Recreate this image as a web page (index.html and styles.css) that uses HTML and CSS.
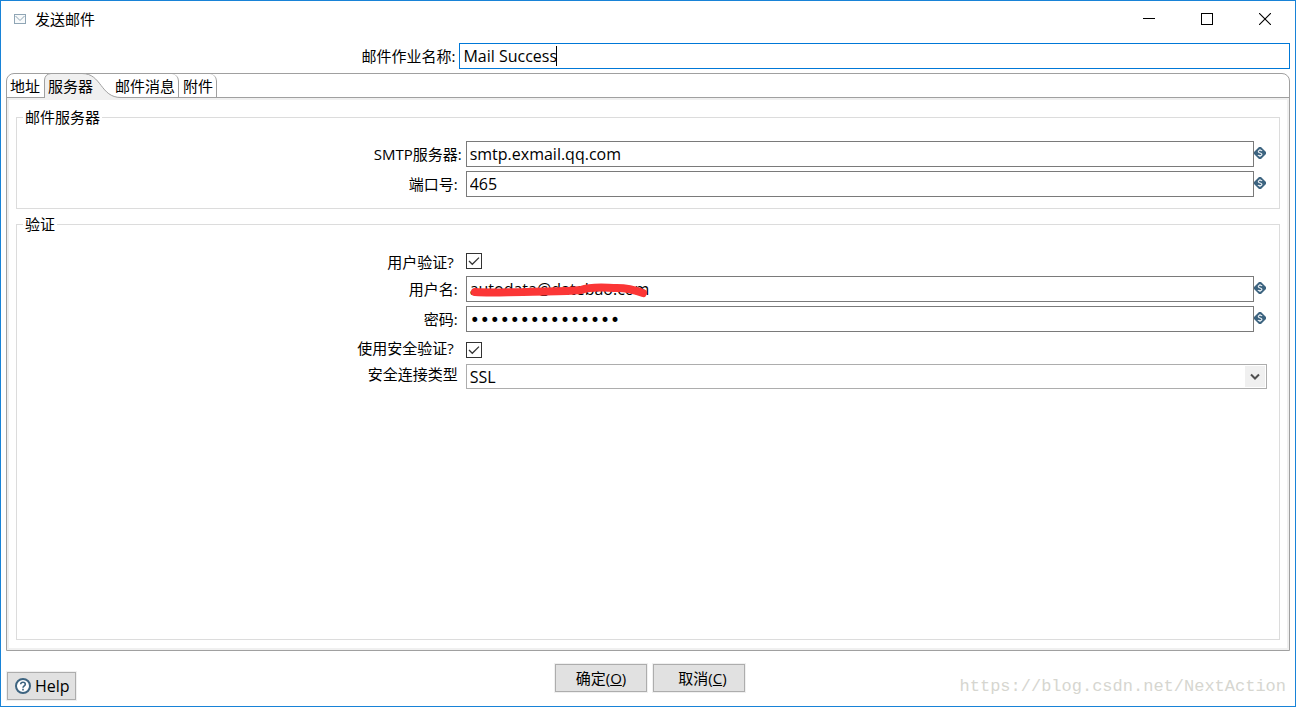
FILE: index.html
```html
<!DOCTYPE html>
<html lang="zh-CN">
<head>
<meta charset="utf-8">
<title>发送邮件</title>
<link rel="stylesheet" href="styles.css">
</head>
<body>
<svg class="defs" aria-hidden="true">
  <symbol id="variable" viewBox="0 0 12 12">
    <path d="M5 0H7L12 5V7L7 12H5L0 7V5Z" fill="#3d6480"/>
    <path d="M8 4C7.500 3 4.300 2.900 4.300 4.500C4.300 6.200 7.900 5.700 7.900 7.400C7.900 9 4.500 9 4 8M6 2V3M6 9V10" fill="none" stroke="#e4ebf0" stroke-width="1.200"/>
  </symbol>
  <symbol id="tick" viewBox="0 0 16 16">
    <path d="M3 8 6.300 11.300 13 4.600" fill="none" stroke="#333" stroke-width="1.300"/>
  </symbol>
</svg>
<form class="window">
  <header class="titlebar">
    <svg class="mail-icon" width="12" height="10" viewBox="0 0 12 10"><rect x=".5" y=".5" width="11" height="9" fill="#f8fafb" stroke="#8fa5b5"/><path d="M1.500 2 6 6.500 10.500 2" fill="none" stroke="#8fa5b5"/></svg>
    <h1 class="title">发送邮件</h1>
    <div class="window-controls">
      <button type="button" class="window-button" aria-label="最小化"><svg width="12" height="12"><path d="M0 5.500H12" stroke="#000"/></svg></button>
      <button type="button" class="window-button" aria-label="最大化"><svg width="12" height="12"><rect x=".5" y=".5" width="11" height="11" fill="none" stroke="#000"/></svg></button>
      <button type="button" class="window-button" aria-label="关闭"><svg width="12" height="12"><path d="M0 0 12 12M12 0 0 12" stroke="#000" stroke-width="1.100"/></svg></button>
    </div>
  </header>

  <div class="name-row">
    <label class="label" for="job">邮件作业名称:</label>
    <div class="job-box"><input class="text active" id="job" type="text" value="Mail Success"><span class="caret"></span></div>
  </div>

  <main class="folder">
    <div class="tabs" role="tablist">
      <button type="button" role="tab" class="tab tab-first">地址</button>
      <button type="button" role="tab" class="tab tab-selected" aria-selected="true">
        <svg class="tab-shape" width="78" height="26" viewBox="0 0 78 26"><path d="M.5 26V7Q1 1 7 .5H38C58 .5 56 24.500 77 24.500V26Z" fill="#f0f0f0"/><path d="M.5 25V7Q1 1 7 .5H38C58 .5 56 24.500 77 24.500" fill="none" stroke="#a0a0a0"/></svg>
        <span class="tab-text">服务器</span>
      </button>
      <button type="button" role="tab" class="tab tab-edge">邮件消息</button>
      <button type="button" role="tab" class="tab tab-edge">附件</button>
    </div>
    <div class="page" role="tabpanel">
      <fieldset class="group">
        <legend class="legend">邮件服务器</legend>
        <div class="fields fields-server">
          <label class="label" for="smtp">SMTP服务器:</label>
          <div class="variable-field"><input class="text" id="smtp" type="text" value="smtp.exmail.qq.com"><svg class="variable"><use href="#variable"/></svg></div>
          <label class="label inset" for="port">端口号:</label>
          <div class="variable-field"><input class="text" id="port" type="text" value="465"><svg class="variable"><use href="#variable"/></svg></div>
        </div>
      </fieldset>
      <fieldset class="group group-fill">
        <legend class="legend">验证</legend>
        <div class="fields fields-auth">
          <label class="label inset-wide" for="auth">用户验证?</label>
          <div class="check"><input id="auth" type="checkbox" class="box" checked><svg class="tick"><use href="#tick"/></svg></div>
          <label class="label inset" for="user">用户名:</label>
          <div class="variable-field">
            <input class="text" id="user" type="text" value="autodata@datebao.com"><svg class="variable"><use href="#variable"/></svg>
            <svg class="stroke" width="184" height="20" viewBox="0 0 184 20"><path d="M9 13C24 14 43 13 57 13C76 12 96 13 115 11C126 7 140 9 151 9C162 9 169 11 177 14" fill="none" stroke="#fb3636" stroke-width="8" stroke-linecap="round" stroke-linejoin="round"/></svg>
          </div>
          <label class="label inset" for="password">密码:</label>
          <div class="variable-field"><input class="text password" id="password" type="password" value="000000000000000"><svg class="variable"><use href="#variable"/></svg></div>
          <label class="label inset-wide" for="secure">使用安全验证?</label>
          <div class="check check-spaced"><input id="secure" type="checkbox" class="box" checked><svg class="tick"><use href="#tick"/></svg></div>
          <label class="label inset raised" for="type">安全连接类型</label>
          <div class="select-box"><select class="select" id="type"><option>SSL</option></select><span class="arrow"><svg width="10" height="8"><path d="M1 1.500 5 5.500 9 1.500" fill="none" stroke="#505050" stroke-width="2"/></svg></span></div>
        </div>
      </fieldset>
    </div>
  </main>

  <footer class="footer">
    <button type="button" class="button help"><svg width="16" height="16" viewBox="0 0 16 16"><circle cx="8" cy="8" r="7" fill="#fff" stroke="#3d6480" stroke-width="2"/><path d="M5.700 6.300C5.700 3.500 10.300 3.500 10.300 6.200C10.300 8 8 7.800 8 9.800M8 10.800V12.500" fill="none" stroke="#3d6480" stroke-width="1.600"/></svg>Help</button>
    <div class="actions">
      <button type="button" class="button action">确定(<u>O</u>)</button>
      <button type="button" class="button action action-cancel">取消(<u>C</u>)</button>
    </div>
    <span class="watermark">https://blog.csdn.net/NextAction</span>
  </footer>
</form>
</body>
</html>
```

FILE: styles.css
```css
* {
  box-sizing: border-box;
}

body {
  margin: 0;
  background: #fff;
  color: #000;
}

body,
button,
input,
select {
  font-family: "Open Sans", "Noto Sans CJK SC", sans-serif;
  font-size: 15px;
  line-height: 20px;
}

svg {
  display: block;
  flex: none;
}

.defs {
  display: none;
}

.window {
  display: flex;
  flex-direction: column;
  min-height: 100vh;
  padding: 0 5px 6px;
  border: 1px solid #1883d7;
}

/* Title bar */
.titlebar {
  display: flex;
  align-items: center;
  height: 36px;
  padding-left: 8px;
}

.title {
  margin: 0 0 0 9px;
  font-size: 15px;
  font-weight: 400;
}

.window-controls {
  display: flex;
  margin-right: -4px;
  margin-left: auto;
}

.window-button {
  display: flex;
  align-items: center;
  justify-content: center;
  width: 58px;
  height: 36px;
  padding: 0;
  border: 0;
  background: none;
}

/* Fields */
.name-row {
  display: grid;
  grid-template-columns: 35% 1fr;
  column-gap: 4px;
  align-items: center;
  margin-top: 6px;
}

.label {
  text-align: right;
  white-space: nowrap;
}

.inset {
  padding-right: 4px;
}

.inset-wide {
  padding-right: 8px;
}

.raised {
  margin-bottom: 5px;
}

.text {
  display: block;
  flex: 1;
  width: 100%;
  min-width: 0;
  height: 26px;
  padding: 0 3px;
  border: 1px solid #7a7a7a;
  border-radius: 0;
  outline: 0;
  background: #fff;
  color: #000;
  font-size: 16px;
}

.active {
  border-color: #0078d7;
}

.password {
  padding-top: 2px;
  font-family: "DejaVu Sans", sans-serif;
  font-size: 17px;
}

.job-box,
.check,
.select-box {
  position: relative;
}

.caret {
  position: absolute;
  top: 3px;
  left: 97px;
  width: 1px;
  height: 20px;
  background: #000;
}

/* Tab folder */
.folder {
  display: flex;
  flex: 1;
  flex-direction: column;
  margin-top: 4px;
  border: 1px solid #a0a0a0;
  border-radius: 8px 8px 0 0;
}

.tabs {
  display: flex;
  height: 24px;
  border-bottom: 1px solid #a0a0a0;
}

.tab {
  position: relative;
  padding: 0 3px;
  border: 0;
  background: none;
  white-space: nowrap;
}

.tab-first {
  padding-right: 5px;
}

.tab-selected {
  padding-right: 18px;
}

.tab-text {
  position: relative;
}

.tab-shape {
  position: absolute;
  top: -1px;
  left: -1px;
}

.tab-edge {
  padding-left: 4px;
  border-right: 1px solid #a0a0a0;
  border-radius: 0 7px 0 0;
}

.page {
  display: flex;
  flex: 1;
  flex-direction: column;
  gap: 5px;
  padding: 7px 7px 8px;
  border: 2px solid #f0f0f0;
}

.group {
  min-width: 0;
  margin: 0;
  padding: 0 12px 11px 11px;
  border: 1px solid #dcdcdc;
}

.group-fill {
  flex: 1;
}

.legend {
  margin-left: -5px;
  padding: 0 2px;
}

.fields {
  display: grid;
  grid-template-columns: 35% 1fr;
  gap: 4px;
  align-items: center;
}

.fields-server {
  padding-top: 14px;
}

.fields-auth {
  padding-top: 18px;
}

.variable-field {
  position: relative;
  display: flex;
  padding-right: 1px;
}

.variable {
  width: 12px;
  height: 12px;
  margin-top: 6px;
}

.stroke {
  position: absolute;
  top: 3px;
  left: 0;
}

.check {
  height: 18px;
}

.check-spaced {
  height: 24px;
  padding-top: 6px;
}

.box {
  display: block;
  width: 16px;
  height: 16px;
  margin: 0;
  border: 1px solid #333;
  appearance: none;
  background: #fff;
}

.tick {
  position: absolute;
  left: 0;
  width: 16px;
  height: 16px;
  margin-top: -16px;
  pointer-events: none;
}

.select {
  display: block;
  width: 100%;
  height: 25px;
  padding: 0 3px;
  border: 1px solid #adadad;
  border-radius: 0;
  appearance: none;
  background: #fff;
  color: #000;
  font-size: 16px;
}

.arrow {
  position: absolute;
  top: 2px;
  right: 2px;
  display: grid;
  place-items: center;
  width: 20px;
  height: 21px;
  background: #f0f0f0;
  pointer-events: none;
}

/* Footer */
.footer {
  display: grid;
  grid-template-columns: 1fr auto 1fr;
  align-items: end;
  padding-top: 13px;
}

.button {
  height: 28px;
  padding: 0 5px;
  border: 1px solid #adadad;
  outline: 1px solid #f0f0f0;
  background: #e1e1e1;
  color: #000;
}

.help {
  display: flex;
  align-items: center;
  justify-self: start;
  gap: 4px;
  padding-left: 7px;
  margin-left: 1px;
  font-size: 16px;
}

.actions {
  display: flex;
  align-self: start;
  gap: 6px;
  margin-bottom: 8px;
  margin-left: 4px;
}

.action {
  width: 92px;
}

.action-cancel {
  padding-left: 12px;
}

.watermark {
  justify-self: end;
  padding: 0 4px 3px 0;
  color: #d6d6d0;
  font-family: "Liberation Mono", monospace;
  font-size: 17px;
}
```
